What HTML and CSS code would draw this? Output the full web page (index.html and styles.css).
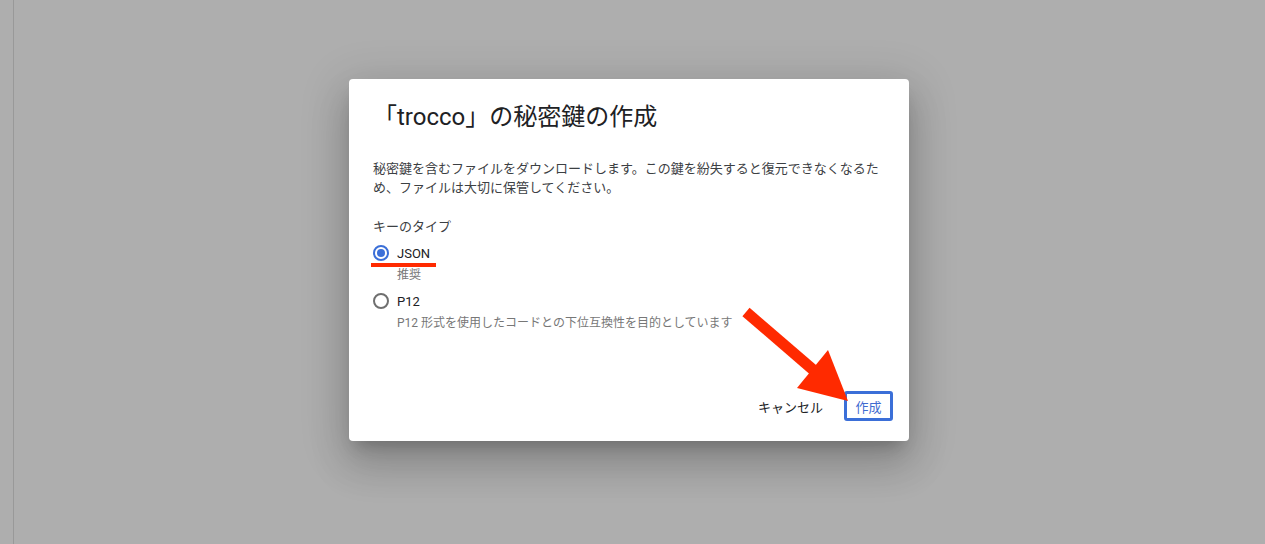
FILE: index.html
```html
<!DOCTYPE html>
<html lang="ja">

<head>
    <meta charset="UTF-8">
    <meta name="viewport" content="width=device-width, initial-scale=1.0">
    <title>秘密鍵の作成</title>
    <link rel="stylesheet" href="styles.css">
</head>

<body>
    <div class="page">
        <div class="dialog">
            <h2 class="title">「trocco」の秘密鍵の作成</h2>
            <p class="desc">秘密鍵を含むファイルをダウンロードします。この鍵を紛失すると復元できなくなるため、ファイルは大切に保管してください。</p>

            <div class="label">キーのタイプ</div>

            <div class="option">
                <span class="radio checked"></span>
                <span class="name">JSON</span>
            </div>
            <div class="hint">推奨</div>

            <div class="option second">
                <span class="radio"></span>
                <span class="name">P12</span>
            </div>
            <div class="hint">P12 形式を使用したコードとの下位互換性を目的としています</div>

            <div class="actions">
                <button class="btn cancel">キャンセル</button>
                <button class="btn create">作成</button>
            </div>
        </div>
    </div>

    <!-- annotations -->
    <div class="underline"></div>
    <svg class="arrow" width="1265" height="544" viewBox="0 0 1265 544">
        <line x1="746" y1="312" x2="818" y2="374" stroke="#ff2a00" stroke-width="11" />
        <polygon points="797,388 828,350 848,401" fill="#ff2a00" />
    </svg>
</body>

</html>
```

FILE: styles.css
```css
html,
body {
    margin: 0;
    height: 544px;
    overflow: hidden;
}

body {
    background: #aeaeae;
    font-family: "Roboto", "Noto Sans CJK JP", sans-serif;
    color: rgba(0, 0, 0, 0.87);
}

.page {
    margin-left: 13px;
    border-left: 1px solid #999999;
    height: 544px;
    padding-top: 79px;
    box-sizing: border-box;
}

.dialog {
    margin-left: 335px;
    width: 560px;
    height: 362px;
    box-sizing: border-box;
    padding: 24px 24px 20px 24px;
    background: #fff;
    border-radius: 4px;
    box-shadow: 0 11px 15px -7px rgba(0, 0, 0, 0.2),
        0 24px 38px 3px rgba(0, 0, 0, 0.14),
        0 9px 46px 8px rgba(0, 0, 0, 0.12);
    display: flex;
    flex-direction: column;
}

.title {
    margin: 0;
    font-size: 24px;
    line-height: 28px;
    font-weight: 400;
    color: #202124;
}

.desc {
    margin: 28px 0 0 0;
    max-width: 506px;
    font-size: 13px;
    line-height: 19px;
    color: #3c4043;
}

.label {
    margin-top: 20px;
    font-size: 13px;
    line-height: 19px;
    color: #3c4043;
}

.option {
    margin-top: 7px;
    display: flex;
    align-items: center;
    height: 20px;
}

.option.second {
    margin-top: 8px;
}

.radio {
    width: 16px;
    height: 16px;
    box-sizing: border-box;
    border: 2px solid #6f6f6f;
    border-radius: 50%;
    margin-right: 8px;
    position: relative;
}

.radio.checked {
    border-color: #3b6fd8;
}

.radio.checked::after {
    content: "";
    position: absolute;
    left: 2px;
    top: 2px;
    width: 8px;
    height: 8px;
    border-radius: 50%;
    background: #3b6fd8;
}

.name {
    font-size: 13px;
    color: #202124;
}

.hint {
    margin-top: 4px;
    margin-left: 24px;
    font-size: 12px;
    line-height: 16px;
    color: #777777;
}

.actions {
    margin-top: auto;
    margin-right: -8px;
    display: flex;
    justify-content: flex-end;
    align-items: center;
}

.btn {
    font-family: inherit;
    font-size: 13px;
    background: #fff;
    cursor: pointer;
}

.cancel {
    border: none;
    padding: 0 12px;
    margin-right: 9px;
    height: 30px;
    color: #202124;
}

.create {
    width: 49px;
    height: 30px;
    padding: 0;
    border: 3px solid #3b6fd8;
    border-radius: 3px;
    color: #3f6bd1;
}

.underline {
    position: absolute;
    left: 371px;
    top: 263px;
    width: 65px;
    height: 4px;
    background: #ff2a00;
}

.arrow {
    position: absolute;
    left: 0;
    top: 0;
    pointer-events: none;
}
```
